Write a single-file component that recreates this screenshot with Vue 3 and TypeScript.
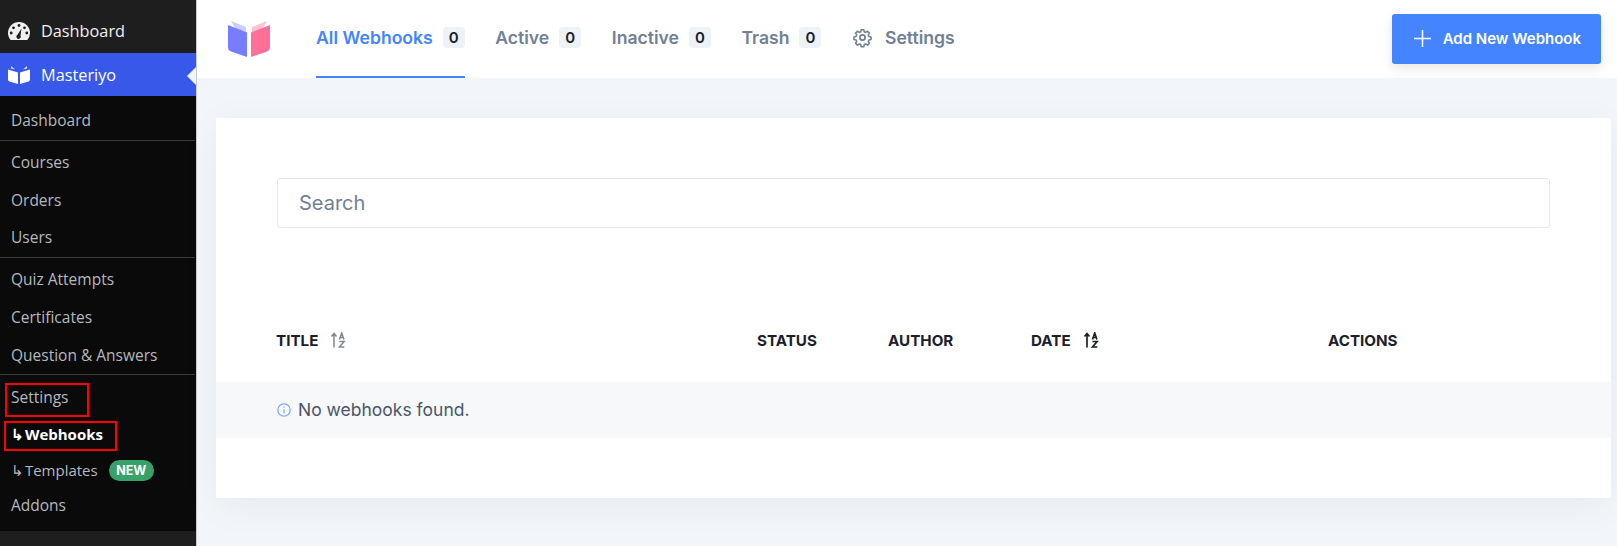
<script setup lang="ts">
interface SideItem {
  label: string
  divider?: boolean
  active?: boolean
  sub?: boolean
  box?: string
  tight?: boolean
  badge?: string
}

interface Tab {
  label: string
  count: number
  active?: boolean
}

const sideItems: SideItem[] = [
  { label: 'Dashboard', divider: true },
  { label: 'Courses' },
  { label: 'Orders' },
  { label: 'Users', divider: true },
  { label: 'Quiz Attempts' },
  { label: 'Certificates' },
  { label: 'Question & Answers', divider: true },
  { label: 'Settings', box: 'box-settings' },
  { label: 'Webhooks', sub: true, active: true, box: 'box-webhooks' },
  { label: 'Templates', sub: true, badge: 'NEW', tight: true },
  { label: 'Addons', tight: true },
]

const tabs: Tab[] = [
  { label: 'All Webhooks', count: 0, active: true },
  { label: 'Active', count: 0 },
  { label: 'Inactive', count: 0 },
  { label: 'Trash', count: 0 },
]
</script>

<template>
  <div class="page">
    <aside class="sidebar">
      <div class="wp-item">
        <svg class="wp-icon" viewBox="0 0 22 18">
          <path fill="#f0f0f1" d="M11 0a11 11 0 0 0-11 11c0 2.700 1 5.200 2.600 7h16.800a11 11 0 0 0 2.600-7A11 11 0 0 0 11 0z" />
          <circle cx="11" cy="3.500" r="1.400" fill="#1e1e1e" />
          <circle cx="5.500" cy="5.800" r="1.400" fill="#1e1e1e" />
          <circle cx="3.200" cy="11" r="1.400" fill="#1e1e1e" />
          <circle cx="16.500" cy="5.800" r="1.400" fill="#1e1e1e" />
          <circle cx="18.800" cy="11" r="1.400" fill="#1e1e1e" />
          <path fill="#1e1e1e" d="M13.500 6.500l-1 7a2.200 2.200 0 1 1-3-.8z" />
        </svg>
        <span>Dashboard</span>
      </div>
      <div class="wp-item current">
        <svg class="wp-icon" viewBox="0 0 22 18">
          <path fill="#fff" d="M0 3.500l10 3v11.500L1.500 15.500Q0 15 0 13.500z" />
          <path fill="#fff" d="M22 3.500l-10 3v11.500l8.500-2.500q1.500-.5 1.500-2z" />
          <path fill="#dfe4fb" d="M3 0l4 3.500-4-1zM19 0l-4 3.500 4-1z" />
        </svg>
        <span>Masteriyo</span>
        <i class="pointer"></i>
      </div>
      <ul class="submenu">
        <li
          v-for="item in sideItems"
          :key="item.label"
          class="sub-row"
          :class="{ divider: item.divider, active: item.active, tight: item.tight }"
        >
          <span class="sub-label" :class="[item.box, { nested: item.sub }]">
            <template v-if="item.sub">↳ </template>{{ item.label }}
          </span>
          <span v-if="item.badge" class="new-badge">{{ item.badge }}</span>
        </li>
      </ul>
    </aside>

    <main class="content">
      <header class="topbar">
        <svg class="logo" viewBox="0 0 44 38">
          <path fill="#c9cdff" d="M4 1l15 6v20z" />
          <path fill="#ffc2d4" d="M40 1L25 7v20z" />
          <path fill="#787dff" d="M1 5l19 7.500V37L4 31.500Q1 30.500 1 27z" />
          <path fill="#ff6f98" d="M43 5l-19 7.500V37l16-5.500q3-1 3-4.500z" />
        </svg>
        <nav class="tabs">
          <a v-for="tab in tabs" :key="tab.label" class="tab" :class="{ active: tab.active }">
            {{ tab.label }}
            <span class="count">{{ tab.count }}</span>
          </a>
          <a class="tab settings-tab">
            <svg class="gear" viewBox="0 0 24 24" fill="none" stroke="currentColor" stroke-width="2" stroke-linecap="round" stroke-linejoin="round">
              <circle cx="12" cy="12" r="3" />
              <path d="M10.300 2.800h3.400l.6 2.800 1.900.8 2.400-1.500 2.400 2.400-1.500 2.400.8 1.900 2.800.6v3.400l-2.800.6-.8 1.900 1.500 2.400-2.400 2.400-2.400-1.500-1.900.8-.6 2.800h-3.400l-.6-2.800-1.900-.8-2.400 1.500-2.400-2.400 1.500-2.400-.8-1.900-2.800-.6v-3.400l2.800-.6.8-1.900-1.500-2.400 2.400-2.400 2.400 1.500 1.900-.8z" transform="translate(12 12) scale(.88) translate(-12 -13)" />
            </svg>
            Settings
          </a>
        </nav>
        <button class="add-btn">
          <svg class="plus" viewBox="0 0 18 18" fill="none" stroke="#fff" stroke-width="1.600">
            <path d="M9 0v18M0 9h18" />
          </svg>
          Add New Webhook
        </button>
      </header>

      <section class="card">
        <div class="search-wrap">
          <input class="search" type="text" placeholder="Search" />
        </div>
        <div class="table-head">
          <div class="th">
            TITLE
            <svg class="sort muted" viewBox="0 0 16 16" fill="none" stroke="currentColor" stroke-width="1.500">
              <path d="M4 15.500V2M1.500 4.500L4 1.500l2.500 3M9.500 7.500l2.200-6.500 2.200 6.500M10.300 5.500h2.800M9.500 9.500h4.600l-4.600 5.500h4.800" />
            </svg>
          </div>
          <div class="th">STATUS</div>
          <div class="th">AUTHOR</div>
          <div class="th">
            DATE
            <svg class="sort" viewBox="0 0 16 16" fill="none" stroke="currentColor" stroke-width="1.700">
              <path d="M4 15.500V2M1.500 4.500L4 1.500l2.500 3M9.500 7.500l2.200-6.500 2.200 6.500M10.300 5.500h2.800M9.500 9.500h4.600l-4.600 5.500h4.800" />
            </svg>
          </div>
          <div class="th">ACTIONS</div>
        </div>
        <div class="empty-row">
          <svg class="info" viewBox="0 0 14 14" fill="none" stroke="#7aa5ff" stroke-width="1.200">
            <circle cx="7" cy="7" r="6.200" />
            <path d="M7 6.200v4M7 3.600v1.200" />
          </svg>
          No webhooks found.
        </div>
      </section>
    </main>
  </div>
</template>

<style scoped>
.page {
  display: flex;
  height: 546px;
  overflow: hidden;
  background: #f2f5f9;
}

.sidebar {
  width: 197px;
  box-sizing: border-box;
  flex-shrink: 0;
  background: #1e1e1e;
  border-right: 1px solid #c9c9c9;
  font-family: "Open Sans", "Noto Sans", sans-serif;
}

.wp-item {
  position: relative;
  display: flex;
  align-items: center;
  height: 53px;
  padding: 9px 0 0 8px;
  box-sizing: border-box;
  gap: 11px;
  color: #f0f0f1;
  font-size: 16.3px;
}

.wp-item.current {
  height: 43px;
  padding-top: 0;
  background: #3858e9;
  color: #fff;
}

.wp-icon {
  width: 22px;
  height: 18px;
}

.pointer {
  position: absolute;
  right: 0;
  top: 14px;
  border: 9px solid transparent;
  border-left-width: 0;
  border-right-color: #f0f3f7;
}

.submenu {
  height: 435px;
  box-sizing: border-box;
  margin: 0;
  padding: 6px 0 0;
  list-style: none;
  background: #0a0a0a;
}

.sub-row {
  display: flex;
  align-items: center;
  height: 37.6px;
  padding-left: 11px;
  color: #b4b9be;
  font-size: 15.5px;
}

.sub-row.divider {
  box-sizing: content-box;
  border-bottom: 1px solid #3c3c3c;
  margin-right: 1px;
  margin-bottom: 3.400px;
}

.sub-row.active {
  color: #fff;
  font-size: 15px;
  font-weight: 700;
}

.sub-row.tight {
  height: 35px;
}

.sub-row.tight:nth-child(10) {
  margin-top: -1px;
  font-size: 15px;
}

.sub-label {
  position: relative;
  line-height: 21px;
}

.sub-label.nested {
  word-spacing: -3px;
}

.box-settings::after,
.box-webhooks::after {
  content: "";
  position: absolute;
  border: 2px solid #f00;
}

.box-settings::after {
  inset: -4px -21px -9px -6px;
}

.box-webhooks::after {
  inset: -3px -14px -6px -7px;
}

.new-badge {
  margin-left: 11px;
  padding: 0 7.500px;
  border-radius: 11px;
  background: #38a169;
  color: #fff;
  font: 700 12.5px/21px Inter, sans-serif;
}

.content {
  flex: 1;
  min-width: 0;
  font-family: Inter, sans-serif;
}

.topbar {
  display: flex;
  align-items: center;
  height: 78px;
  padding: 0 16px 0 30px;
  background: #fff;
}

.logo {
  width: 44px;
  height: 38px;
}

.tabs {
  display: flex;
  gap: 30.500px;
  height: 100%;
  margin-left: 45px;
}

.tab {
  display: flex;
  align-items: center;
  gap: 10px;
  height: 100%;
  box-sizing: border-box;
  padding-bottom: 2px;
  border-bottom: 2px solid transparent;
  color: #718096;
  font-size: 17.6px;
  font-weight: 600;
}

.tab.active {
  color: #4584ff;
  border-bottom-color: #4584ff;
}

.settings-tab {
  gap: 12px;
}

.count {
  display: inline-block;
  width: 22px;
  text-align: center;
  border-radius: 4px;
  background: #edf2f7;
  color: #1a202c;
  font-size: 15px;
  line-height: 21px;
}

.gear {
  width: 21px;
  height: 21px;
}

.add-btn {
  display: flex;
  align-items: center;
  gap: 12px;
  height: 50px;
  margin-left: auto;
  padding: 0 20px 1px 22px;
  border: none;
  border-radius: 3px;
  background: #4584ff;
  color: #fff;
  font: 600 15px Inter, sans-serif;
  box-shadow: 0 4px 12px rgba(0, 0, 0, 0.1);
}

.plus {
  width: 17px;
  height: 17px;
}

.card {
  margin: 40px 6px 0 19px;
  height: 380px;
  background: #fff;
  box-shadow: 0 8px 36px rgba(0, 0, 0, 0.05);
}

.search-wrap {
  padding: 60px 61px 0 61px;
}

.search {
  display: block;
  width: 100%;
  height: 50px;
  box-sizing: border-box;
  padding: 0 21px;
  border: 1px solid #e2e8f0;
  border-radius: 3px;
  font: 20px Inter, sans-serif;
  color: #1a202c;
  outline: none;
}

.search::placeholder {
  color: #718096;
}

.table-head {
  display: grid;
  grid-template-columns: 481px 131px 143px 297px 1fr;
  align-items: center;
  height: 84px;
  margin-top: 70px;
  padding-left: 60px;
}

.th {
  display: flex;
  align-items: center;
  gap: 12px;
  color: #1a202c;
  font-size: 15.2px;
  font-weight: 700;
}

.sort {
  width: 16px;
  height: 16px;
}

.sort.muted {
  color: #808890;
}

.empty-row {
  display: flex;
  align-items: center;
  gap: 7px;
  height: 56px;
  padding-left: 61px;
  padding-bottom: 1px;
  box-sizing: border-box;
  background: #f7f8fa;
  color: #4a5568;
  font-size: 17.5px;
}

.info {
  width: 14px;
  height: 14px;
}
</style>

<style>
html,
body {
  margin: 0;
  background: #f2f5f9;
}
</style>
